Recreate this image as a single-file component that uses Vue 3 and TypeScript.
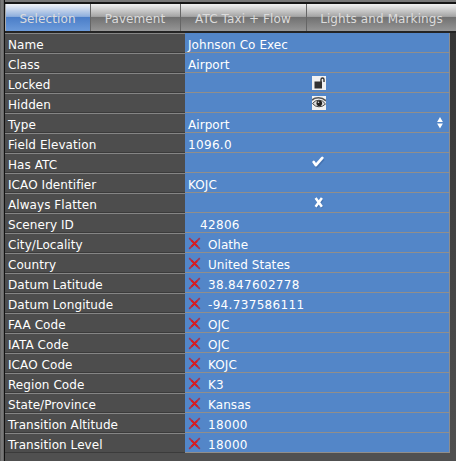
<script setup lang="ts">
interface Row {
  label: string
  value?: string
  icon?: 'lock' | 'eye' | 'check' | 'cross'
  removable?: boolean
  stepper?: boolean
  indent?: boolean
}

const tabs: string[] = ['Selection', 'Pavement', 'ATC Taxi + Flow', 'Lights and Markings']

const rows: Row[] = [
  { label: 'Name', value: 'Johnson Co Exec' },
  { label: 'Class', value: 'Airport' },
  { label: 'Locked', icon: 'lock' },
  { label: 'Hidden', icon: 'eye' },
  { label: 'Type', value: 'Airport', stepper: true },
  { label: 'Field Elevation', value: '1096.0' },
  { label: 'Has ATC', icon: 'check' },
  { label: 'ICAO Identifier', value: 'KOJC' },
  { label: 'Always Flatten', icon: 'cross' },
  { label: 'Scenery ID', value: '42806', indent: true },
  { label: 'City/Locality', value: 'Olathe', removable: true },
  { label: 'Country', value: 'United States', removable: true },
  { label: 'Datum Latitude', value: '38.847602778', removable: true },
  { label: 'Datum Longitude', value: '-94.737586111', removable: true },
  { label: 'FAA Code', value: 'OJC', removable: true },
  { label: 'IATA Code', value: 'OJC', removable: true },
  { label: 'ICAO Code', value: 'KOJC', removable: true },
  { label: 'Region Code', value: 'K3', removable: true },
  { label: 'State/Province', value: 'Kansas', removable: true },
  { label: 'Transition Altitude', value: '18000', removable: true },
  { label: 'Transition Level', value: '18000', removable: true },
]

const isNumeric = (v?: string): boolean => /^-?[\d.]+$/.test(v ?? '')
</script>

<template>
  <div class="window">
    <div class="splitter"></div>
    <div class="panel">
      <div class="topbar"></div>
      <nav class="tabs">
        <div v-for="(t, i) in tabs" :key="t" class="tab" :class="['tab-' + i, { active: i === 0 }]">
          <span>{{ t }}</span>
        </div>
      </nav>
      <div class="rows">
        <div v-for="r in rows" :key="r.label" class="row">
          <div class="label">{{ r.label }}</div>
          <div class="value" :class="{ indent: r.indent, centered: r.icon }">
            <svg v-if="r.removable" class="remove" width="13" height="13" viewBox="0 0 13 13">
              <path d="M1.2 1.2 11.8 11.8M11.8 1.2 1.2 11.8" stroke="#a8344c" stroke-width="1.7" />
              <path d="M3.4 3.4 9.4 9.4M9 4 3.4 9.6" stroke="#d81c20" stroke-width="1.9" />
            </svg>
            <span v-if="r.value" :class="{ num: isNumeric(r.value) }">{{ r.value }}</span>
            <svg v-if="r.icon === 'lock'" class="icon" width="14" height="14" viewBox="0 0 14 14">
              <rect width="14" height="14" fill="#f1f1f1" />
              <rect x="2.5" y="5.5" width="7.5" height="7" fill="#333" />
              <path d="M9 6V3.5Q9 2 10.5 2T12 3.5V6" fill="none" stroke="#333" stroke-width="1.4" />
            </svg>
            <svg v-else-if="r.icon === 'eye'" class="icon" width="14" height="14" viewBox="0 0 14 14">
              <rect width="14" height="14" fill="#f1f1f1" />
              <path d="M0 4.2Q2 1.8 6.5 1.8T14 5" fill="none" stroke="#555" stroke-width="1.6" />
              <path d="M.5 7.5Q3 4.2 7 4.2T13.5 8Q11 10.8 7 10.8T.5 7.5Z" fill="#ddd" stroke="#444" stroke-width="1" />
              <circle cx="7.3" cy="7.3" r="2.8" fill="#222" />
              <circle cx="6.5" cy="6.3" r=".8" fill="#ddd" />
            </svg>
            <svg v-else-if="r.icon === 'check'" class="icon check" width="14" height="14" viewBox="0 0 14 14">
              <path d="M2.5 7.5 4.8 10.5 11.5 3" fill="none" stroke="#375f96" stroke-opacity=".45" stroke-width="3" />
              <path d="M1.7 6 3.9 9.2 10.3 1.9" fill="none" stroke="#fff" stroke-width="2.7" stroke-linejoin="round" stroke-linecap="round" />
            </svg>
            <svg v-else-if="r.icon === 'cross'" class="icon" width="14" height="14" viewBox="0 0 14 14">
              <path d="M4.5 3.5 10.5 11.5M10.5 3.5 4.5 11.5" stroke="#375f96" stroke-opacity=".5" stroke-width="2.5" />
              <path d="M3.6 2 9.9 10.8M9.9 2 3.6 10.8" stroke="#fff" stroke-width="2.5" />
            </svg>
            <svg v-if="r.stepper" class="stepper" width="6" height="12" viewBox="0 0 6 12">
              <path d="M3 0 5.9 5H.1ZM3 11.5 .1 6.5H5.9Z" fill="#fff" />
            </svg>
          </div>
        </div>
      </div>
    </div>
  </div>
</template>

<style>
body {
  margin: 0;
  background: #4f4f4f;
}
</style>

<style scoped>
.window {
  display: flex;
  width: 456px;
  height: 461px;
  overflow: hidden;
  font: 12px/18px 'DejaVu Sans', sans-serif;
  letter-spacing: 0.07px;
  color: #fff;
}
.splitter {
  box-sizing: border-box;
  flex: none;
  width: 5px;
  background: linear-gradient(90deg, #5c5c5c, #828282 50%, #666 90%);
  border-right: 1px solid #111;
}
.panel {
  flex: 1;
  min-width: 0;
  background: linear-gradient(#333 0, #363636 40px, #505050 455px);
}
.topbar {
  box-sizing: border-box;
  height: 4px;
  background: #777;
  border-bottom: 2px solid #151515;
}
.tabs {
  display: flex;
  height: 27px;
  border-bottom: 2px solid #242424;
}
.tab {
  box-sizing: border-box;
  flex: none;
  display: flex;
  align-items: center;
  justify-content: center;
  color: #dcdcdc;
  background: linear-gradient(#f0f0f0 0, #a5a5a5 46%, #717171 50%, #969696 100%);
  border-right: 1px solid #666;
}
.tab span {
  white-space: nowrap;
  padding-top: 3px;
  margin-left: -1px;
  letter-spacing: 0.1px;
}
.tab.active {
  background: linear-gradient(#f0f2f6 0, #8fafdd 46%, #4b7ec8 50%, #6b9ada 100%);
  border-left: 1px solid #aaa;
}
.tab-0 { width: 86px; }
.tab-1 { width: 90px; }
.tab-2 { width: 126px; }
.tab-3 { width: 151px; }
.row {
  display: flex;
  height: 20px;
}
.label {
  box-sizing: border-box;
  width: 180px;
  padding: 2px 0 0 3px;
  background: #4d4d4d;
  border-top: 1px solid #858585;
  border-bottom: 1px solid #3b3b3b;
}
.value {
  box-sizing: border-box;
  display: flex;
  width: 265px;
  padding: 3px 6px 0 3px;
  background: #5386c8;
  border-bottom: 1px solid #918e8a;
  border-right: 1px solid #8d8d8d;
}
.num {
  letter-spacing: 0.33px;
}
.indent {
  padding-left: 15px;
}
.remove {
  flex: none;
  margin-right: 7px;
  margin-top: 1px;
}
.centered {
  justify-content: center;
  padding: 3px 0 0 4px;
}
.stepper {
  margin-left: auto;
  margin-top: 1px;
}
</style>
